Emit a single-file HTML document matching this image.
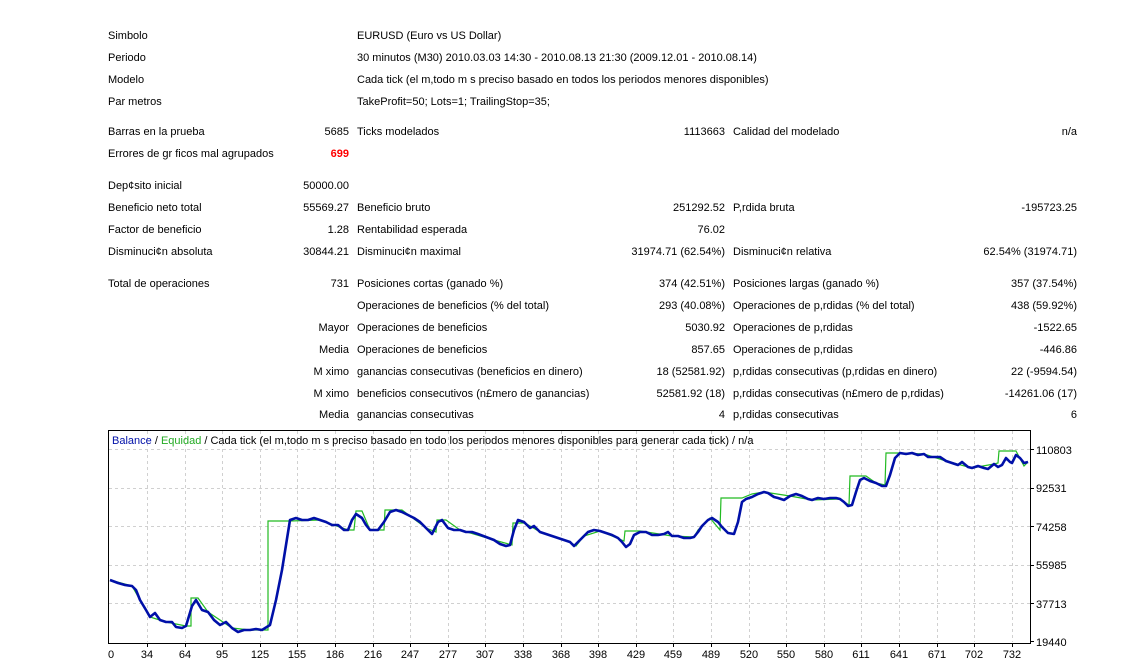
<!DOCTYPE html>
<html><head><meta charset="utf-8"><style>
body{margin:0;width:1137px;height:663px;background:#fff;position:relative;overflow:hidden;font-family:"Liberation Sans","DejaVu Sans",sans-serif;font-size:11px;color:#000}
.t{position:absolute;white-space:nowrap;line-height:14px}
.r{text-align:right}
#w{position:absolute;left:0;top:1px;width:1137px;height:420px}
</style></head><body>
<div id="w">
<div class="t" style="left:108px;top:28px">Simbolo</div><div class="t" style="left:357px;top:28px">EURUSD (Euro vs US Dollar)</div>
<div class="t" style="left:108px;top:50px">Periodo</div><div class="t" style="left:357px;top:50px">30 minutos (M30) 2010.03.03 14:30 - 2010.08.13 21:30 (2009.12.01 - 2010.08.14)</div>
<div class="t" style="left:108px;top:72px">Modelo</div><div class="t" style="left:357px;top:72px">Cada tick (el m,todo m s preciso basado en todos los periodos menores disponibles)</div>
<div class="t" style="left:108px;top:94px">Par metros</div><div class="t" style="left:357px;top:94px">TakeProfit=50; Lots=1; TrailingStop=35;</div>

<div class="t" style="left:108px;top:124px">Barras en la prueba</div><div class="t r" style="right:788px;top:124px">5685</div>
<div class="t" style="left:357px;top:124px">Ticks modelados</div><div class="t r" style="right:412px;top:124px">1113663</div>
<div class="t" style="left:733px;top:124px">Calidad del modelado</div><div class="t r" style="right:60px;top:124px">n/a</div>
<div class="t" style="left:108px;top:146px">Errores de gr ficos mal agrupados</div><div class="t r" style="right:788px;top:146px;color:#f00;font-weight:bold">699</div>

<div class="t" style="left:108px;top:178px">Dep¢sito inicial</div><div class="t r" style="right:788px;top:178px">50000.00</div>
<div class="t" style="left:108px;top:200px">Beneficio neto total</div><div class="t r" style="right:788px;top:200px">55569.27</div>
<div class="t" style="left:357px;top:200px">Beneficio bruto</div><div class="t r" style="right:412px;top:200px">251292.52</div>
<div class="t" style="left:733px;top:200px">P,rdida bruta</div><div class="t r" style="right:60px;top:200px">-195723.25</div>
<div class="t" style="left:108px;top:222px">Factor de beneficio</div><div class="t r" style="right:788px;top:222px">1.28</div>
<div class="t" style="left:357px;top:222px">Rentabilidad esperada</div><div class="t r" style="right:412px;top:222px">76.02</div>
<div class="t" style="left:108px;top:244px">Disminuci¢n absoluta</div><div class="t r" style="right:788px;top:244px">30844.21</div>
<div class="t" style="left:357px;top:244px">Disminuci¢n maximal</div><div class="t r" style="right:412px;top:244px">31974.71 (62.54%)</div>
<div class="t" style="left:733px;top:244px">Disminuci¢n relativa</div><div class="t r" style="right:60px;top:244px">62.54% (31974.71)</div>

<div class="t" style="left:108px;top:276px">Total de operaciones</div><div class="t r" style="right:788px;top:276px">731</div>
<div class="t" style="left:357px;top:276px">Posiciones cortas (ganado %)</div><div class="t r" style="right:412px;top:276px">374 (42.51%)</div>
<div class="t" style="left:733px;top:276px">Posiciones largas (ganado %)</div><div class="t r" style="right:60px;top:276px">357 (37.54%)</div>
<div class="t" style="left:357px;top:298px">Operaciones de beneficios (% del total)</div><div class="t r" style="right:412px;top:298px">293 (40.08%)</div>
<div class="t" style="left:733px;top:298px">Operaciones de p,rdidas (% del total)</div><div class="t r" style="right:60px;top:298px">438 (59.92%)</div>
<div class="t r" style="right:788px;top:320px">Mayor</div>
<div class="t" style="left:357px;top:320px">Operaciones de beneficios</div><div class="t r" style="right:412px;top:320px">5030.92</div>
<div class="t" style="left:733px;top:320px">Operaciones de p,rdidas</div><div class="t r" style="right:60px;top:320px">-1522.65</div>
<div class="t r" style="right:788px;top:342px">Media</div>
<div class="t" style="left:357px;top:342px">Operaciones de beneficios</div><div class="t r" style="right:412px;top:342px">857.65</div>
<div class="t" style="left:733px;top:342px">Operaciones de p,rdidas</div><div class="t r" style="right:60px;top:342px">-446.86</div>
<div class="t r" style="right:788px;top:364px">M ximo</div>
<div class="t" style="left:357px;top:364px">ganancias consecutivas (beneficios en dinero)</div><div class="t r" style="right:412px;top:364px">18 (52581.92)</div>
<div class="t" style="left:733px;top:364px">p,rdidas consecutivas (p,rdidas en dinero)</div><div class="t r" style="right:60px;top:364px">22 (-9594.54)</div>
<div class="t r" style="right:788px;top:386px">M ximo</div>
<div class="t" style="left:357px;top:386px">beneficios consecutivos (n£mero de ganancias)</div><div class="t r" style="right:412px;top:386px">52581.92 (18)</div>
<div class="t" style="left:733px;top:386px">p,rdidas consecutivas (n£mero de p,rdidas)</div><div class="t r" style="right:60px;top:386px">-14261.06 (17)</div>
<div class="t r" style="right:788px;top:407px">Media</div>
<div class="t" style="left:357px;top:407px">ganancias consecutivas</div><div class="t r" style="right:412px;top:407px">4</div>
<div class="t" style="left:733px;top:407px">p,rdidas consecutivas</div><div class="t r" style="right:60px;top:407px">6</div>
</div>

<svg width="1137" height="663" style="position:absolute;left:0;top:0" font-family="Liberation Sans, sans-serif" font-size="11">
<g stroke="#d0d0d0" stroke-dasharray="3,3" stroke-width="1">
<line x1="109" x2="1030" y1="449.5" y2="449.5"/><line x1="109" x2="1030" y1="488.5" y2="488.5"/><line x1="109" x2="1030" y1="526.5" y2="526.5"/><line x1="109" x2="1030" y1="565.5" y2="565.5"/><line x1="109" x2="1030" y1="603.5" y2="603.5"/>
<line x1="147.5" x2="147.5" y1="431" y2="642"/><line x1="185.5" x2="185.5" y1="431" y2="642"/><line x1="222.5" x2="222.5" y1="431" y2="642"/><line x1="260.5" x2="260.5" y1="431" y2="642"/><line x1="297.5" x2="297.5" y1="431" y2="642"/><line x1="335.5" x2="335.5" y1="431" y2="642"/><line x1="373.5" x2="373.5" y1="431" y2="642"/><line x1="410.5" x2="410.5" y1="431" y2="642"/><line x1="448.5" x2="448.5" y1="431" y2="642"/><line x1="485.5" x2="485.5" y1="431" y2="642"/><line x1="523.5" x2="523.5" y1="431" y2="642"/><line x1="561.5" x2="561.5" y1="431" y2="642"/><line x1="598.5" x2="598.5" y1="431" y2="642"/><line x1="636.5" x2="636.5" y1="431" y2="642"/><line x1="673.5" x2="673.5" y1="431" y2="642"/><line x1="711.5" x2="711.5" y1="431" y2="642"/><line x1="749.5" x2="749.5" y1="431" y2="642"/><line x1="786.5" x2="786.5" y1="431" y2="642"/><line x1="824.5" x2="824.5" y1="431" y2="642"/><line x1="861.5" x2="861.5" y1="431" y2="642"/><line x1="899.5" x2="899.5" y1="431" y2="642"/><line x1="937.5" x2="937.5" y1="431" y2="642"/><line x1="974.5" x2="974.5" y1="431" y2="642"/><line x1="1012.5" x2="1012.5" y1="431" y2="642"/>
</g>
<rect x="108.5" y="430.5" width="922" height="213" fill="none" stroke="#000"/>
<g stroke="#000"><line x1="1030" x2="1034" y1="449.5" y2="449.5"/><line x1="1030" x2="1034" y1="488.5" y2="488.5"/><line x1="1030" x2="1034" y1="526.5" y2="526.5"/><line x1="1030" x2="1034" y1="565.5" y2="565.5"/><line x1="1030" x2="1034" y1="603.5" y2="603.5"/><line x1="1030" x2="1034" y1="641.5" y2="641.5"/>
<line x1="147.5" x2="147.5" y1="643" y2="647"/><line x1="185.5" x2="185.5" y1="643" y2="647"/><line x1="222.5" x2="222.5" y1="643" y2="647"/><line x1="260.5" x2="260.5" y1="643" y2="647"/><line x1="297.5" x2="297.5" y1="643" y2="647"/><line x1="335.5" x2="335.5" y1="643" y2="647"/><line x1="373.5" x2="373.5" y1="643" y2="647"/><line x1="410.5" x2="410.5" y1="643" y2="647"/><line x1="448.5" x2="448.5" y1="643" y2="647"/><line x1="485.5" x2="485.5" y1="643" y2="647"/><line x1="523.5" x2="523.5" y1="643" y2="647"/><line x1="561.5" x2="561.5" y1="643" y2="647"/><line x1="598.5" x2="598.5" y1="643" y2="647"/><line x1="636.5" x2="636.5" y1="643" y2="647"/><line x1="673.5" x2="673.5" y1="643" y2="647"/><line x1="711.5" x2="711.5" y1="643" y2="647"/><line x1="749.5" x2="749.5" y1="643" y2="647"/><line x1="786.5" x2="786.5" y1="643" y2="647"/><line x1="824.5" x2="824.5" y1="643" y2="647"/><line x1="861.5" x2="861.5" y1="643" y2="647"/><line x1="899.5" x2="899.5" y1="643" y2="647"/><line x1="937.5" x2="937.5" y1="643" y2="647"/><line x1="974.5" x2="974.5" y1="643" y2="647"/><line x1="1012.5" x2="1012.5" y1="643" y2="647"/></g>
<polyline fill="none" stroke="#22bb22" stroke-width="1.2" points="110,580 132,586 140,600 150,617 166,622 186,626 191,626 191,598 198,598 208,612 232,628 250,630 268,630 268,521 290,521 320,520 348,530 354,530 356,511 362,511 370,530 384,530 385,510 402,510 426,528 436,532 437,520 446,520 460,530 494,540 512,545 513,523 525,523 540,532 570,542 576,546 584,536 600,531 624,541 625,531 640,531 672,536 694,537 698,530 710,518 720,530 721,498 742,498 752,494 764,492 790,496 812,500 840,499 849,505 850,476 866,476 876,483 885,485 886,453 900,453 924,454 946,461 972,468 994,464 998,463 999,451 1016,451 1024,466 1028,462"/>
<polyline fill="none" stroke="#0010a8" stroke-width="2.6" stroke-linejoin="round" points="110,580 118,583 125,585 132,586 136,590 140,600 146,610 150,617 155,613 160,620 166,622 172,622 176,627 182,628 186,626 192,606 196,600 202,610 208,612 214,620 220,625 226,622 232,628 238,632 244,630 250,630 256,629 262,630 270,625 276,600 282,570 286,545 290,520 296,518 302,520 308,520 314,518 320,520 326,522 332,525 338,525 344,530 348,530 352,520 356,514 362,518 366,525 370,530 378,530 384,522 390,512 396,510 402,512 408,515 414,518 420,522 426,528 432,534 438,522 442,520 448,528 454,530 460,530 466,532 472,532 478,534 486,537 494,540 500,544 506,546 510,545 514,530 518,520 524,522 530,528 534,526 540,532 546,534 552,536 558,538 564,540 570,542 574,546 578,542 584,536 588,532 594,530 600,531 606,533 612,535 618,538 622,542 626,547 630,544 634,535 640,532 646,532 652,535 658,535 664,534 668,532 672,536 678,536 684,538 690,538 694,537 698,532 702,526 708,520 712,518 718,522 722,527 728,533 734,534 738,522 742,502 746,499 752,497 758,494 764,492 768,493 774,497 778,498 784,500 790,496 796,494 802,496 808,499 812,500 818,498 824,499 830,498 836,498 840,499 844,502 848,506 852,505 856,492 860,480 864,478 870,481 876,483 882,486 886,486 890,475 895,458 900,453 906,454 912,453 918,455 924,454 928,457 934,457 940,457 946,461 952,463 958,465 962,462 968,467 972,468 978,466 984,468 988,469 994,464 998,467 1002,465 1006,458 1010,462 1012,463 1016,455 1020,458 1024,463 1028,462"/>
<text x="112" y="444"><tspan fill="#0010a8">Balance</tspan><tspan fill="#000"> / </tspan><tspan fill="#22aa22">Equidad</tspan><tspan fill="#000"> / Cada tick (el m,todo m s preciso basado en todo los periodos menores disponibles para generar cada tick)  / n/a</tspan></text>
<g fill="#000"><text x="1036" y="454">110803</text><text x="1036" y="492">92531</text><text x="1036" y="531">74258</text><text x="1036" y="569">55985</text><text x="1036" y="608">37713</text><text x="1036" y="646">19440</text></g>
<g fill="#000" text-anchor="middle"><text x="111" y="658">0</text><text x="147" y="658">34</text><text x="185" y="658">64</text><text x="222" y="658">95</text><text x="260" y="658">125</text><text x="297" y="658">155</text><text x="335" y="658">186</text><text x="373" y="658">216</text><text x="410" y="658">247</text><text x="448" y="658">277</text><text x="485" y="658">307</text><text x="523" y="658">338</text><text x="561" y="658">368</text><text x="598" y="658">398</text><text x="636" y="658">429</text><text x="673" y="658">459</text><text x="711" y="658">489</text><text x="749" y="658">520</text><text x="786" y="658">550</text><text x="824" y="658">580</text><text x="861" y="658">611</text><text x="899" y="658">641</text><text x="937" y="658">671</text><text x="974" y="658">702</text><text x="1012" y="658">732</text></g>
</svg>
</body></html>
